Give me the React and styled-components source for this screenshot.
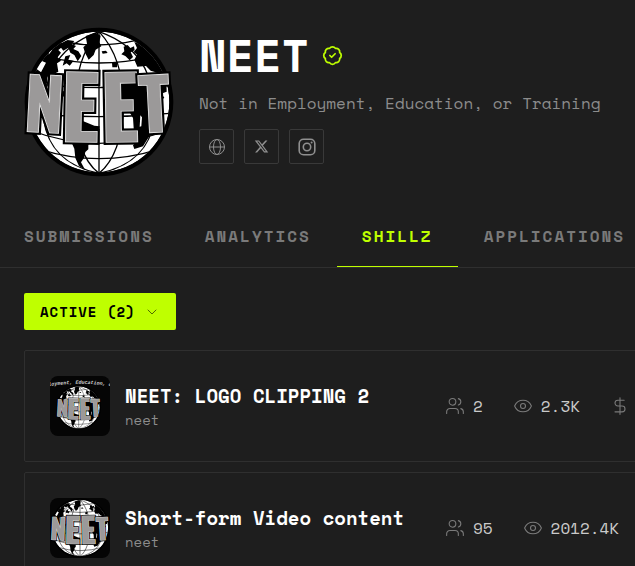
import React from "react";
import styled, { createGlobalStyle } from "styled-components";
import { BadgeCheck, ChevronDown, DollarSign, Eye, Users } from "lucide-react";

const GlobalStyle = createGlobalStyle`
  *, *::before, *::after { box-sizing: border-box; }
  body {
    margin: 0;
    background: #1e1e1e;
    color: #fff;
    font-family: "Space Mono", "DejaVu Sans Mono", monospace;
  }
  button { font-family: inherit; cursor: pointer; }
  h1, h2, p { margin: 0; }
  svg { display: block; flex: none; }
`;

const Page = styled.div`
  height: 100vh;
  overflow: hidden;
`;

const Header = styled.header`
  display: flex;
  gap: 25px;
  padding: 27px 24px 0;
`;

const Avatar = styled.div`
  flex: none;
  width: 150px;
  height: 150px;
`;

const Profile = styled.div`
  display: flex;
  flex-direction: column;
  min-width: 0;
  padding-top: 1px;
`;

const NameRow = styled.div`
  display: flex;
  align-items: center;
  gap: 13px;
  height: 54px;
  color: #bfff00;
`;

const Name = styled.h1`
  color: #fff;
  font-size: 45px;
  line-height: 54px;
  font-weight: 700;
`;

const Bio = styled.p`
  margin-top: 8px;
  color: #8c8c8c;
  font-size: 16px;
  line-height: 26px;
  white-space: nowrap;
`;

const Socials = styled.div`
  display: flex;
  gap: 10px;
  margin-top: 13px;
`;

const SocialLink = styled.a`
  display: grid;
  place-items: center;
  width: 35px;
  height: 35px;
  border: 1px solid #393939;
  border-radius: 2px;
  color: #8f8f8f;
`;

const Tabs = styled.nav`
  display: flex;
  gap: 1px;
  margin-top: 29px;
  padding-left: 24px;
  border-bottom: 1px solid #2f2f2f;
`;

const Tab = styled.button`
  flex: none;
  padding: 0 25px;
  height: 61px;
  border: 0;
  border-bottom: 1px solid ${(p) => (p.$active ? "#bfff00" : "transparent")};
  background: none;
  color: ${(p) => (p.$active ? "#bfff00" : "#7a7a7a")};
  font-size: 16px;
  font-weight: 700;
  line-height: 24px;
  letter-spacing: 2px;
  text-transform: uppercase;
  &:first-child { padding-left: 0; }
`;

const Content = styled.main`
  padding: 25px 24px;
`;

const FilterButton = styled.button`
  display: flex;
  align-items: center;
  gap: 8px;
  height: 37px;
  padding: 0 16px;
  border: 0;
  border-radius: 2px;
  background: #bfff00;
  color: #000;
  font-size: 14px;
  font-weight: 700;
  letter-spacing: 1px;
  text-transform: uppercase;
  svg { color: #4f6a00; }
`;

const CardList = styled.div`
  display: grid;
  gap: 10px;
  min-width: 720px;
  margin-top: 20px;
`;

const Card = styled.article`
  display: grid;
  grid-template-columns: 60px 305px auto;
  align-items: center;
  column-gap: 15px;
  padding: 25px;
  border: 1px solid #2f2f2f;
  border-radius: 2px;
`;

const Thumb = styled.div`
  width: 60px;
  height: 60px;
  overflow: hidden;
  border-radius: 8px;
  background: #050505;
`;

const CardText = styled.div`
  padding-top: 2px;
`;

const CardTitle = styled.h2`
  font-size: 19px;
  line-height: 26px;
  font-weight: 700;
  white-space: nowrap;
`;

const CardOwner = styled.p`
  color: #8c8c8c;
  font-size: 14px;
  line-height: 22px;
`;

const Stats = styled.div`
  display: flex;
  gap: 30px;
`;

const Stat = styled.span`
  display: flex;
  align-items: center;
  gap: 8px;
  color: #cacaca;
  font-size: 16px;
  line-height: 24px;
  svg { color: #7a7a7a; }
`;

const LogoLetter = styled.text`
  font-family: "Oswald", "Liberation Sans Narrow", sans-serif;
  font-weight: 600;
  text-anchor: middle;
  stroke-linejoin: miter;
`;

const LETTERS = [
  { c: "N", x: 84, y: 335, size: 208, turn: 3 },
  { c: "E", x: 194, y: 364, size: 254, turn: 1 },
  { c: "E", x: 316, y: 364, size: 254, turn: -1 },
  { c: "T", x: 423, y: 335, size: 208, turn: -3 },
];

const LETTER_LAYERS = [
  { fill: "#000", stroke: "#000", width: 20 },
  { fill: "#9b9999", stroke: "#e8e8e8", width: 7 },
  { fill: "#9b9999", stroke: "#9b9999", width: 2 },
];

function Globe({ id, viewBox = "27 21 450 450", caption }) {
  return (
    <svg width="100%" height="100%" viewBox={viewBox} role="img" aria-label="NEET globe logo">
      <defs>
        <clipPath id={id}>
          <circle cx="252" cy="246" r="211" />
        </clipPath>
        {caption && <path id={`${id}-arc`} d="M-60 34 Q262 -14 590 34" />}
      </defs>
      <circle cx="252" cy="246" r="223" fill="#000" />
      <g clipPath={`url(#${id})`}>
        <circle cx="252" cy="246" r="211" fill="#fff" />
        <g fill="none" stroke="#000" strokeWidth="4">
          <path d="M252 30V470" />
          <path d="M252 35C200 90 180 170 180 260C185 350 200 420 252 460M252 35C304 90 326 170 326 260C322 350 300 420 252 460" />
          <path d="M252 35C110 85 82 190 86 300C100 390 155 440 252 460M252 35C394 85 422 190 418 300C404 390 349 440 252 460" />
          <path d="M150 66Q252 86 360 62M92 110Q252 148 412 110M50 190Q252 215 455 190M40 280Q252 300 464 280M44 330Q252 410 460 330M75 388Q252 444 430 388" />
        </g>
        <g fill="#000">
          <path d="M35 190L50 140L90 95L135 65L148 76L130 90L138 98L128 112L138 122L126 130L130 155L98 170L92 220L35 225Z" />
          <path d="M138 70L158 60L178 63L170 72L183 78L175 87L190 94L199 108L188 124L178 105L166 98L160 83L145 92L137 82Z" />
          <path d="M151 109L166 105L160 119L176 122L164 137L155 130L143 137Z" />
          <path d="M212 48L242 38L257 47L253 67L259 79L242 89L236 105L221 119L210 98L205 82L216 71Z" />
          <path d="M260 94L273 92L278 99L263 101ZM291 128L308 126L306 142L292 142Z" />
          <path d="M326 80L338 75L346 84L357 79L359 91L347 97L354 111L344 121L331 108L319 103L328 94Z" />
          <path d="M358 66L389 76L426 105L453 151L455 215L436 222L432 160L407 152L393 138L367 140L358 119L366 104L356 96L366 84Z" />
          <path d="M302 184L330 187L365 181L434 194L433 220L448 232L426 262L420 312L402 350L384 379L358 387L354 376L370 360L357 340L354 294L343 275L310 272L300 239Z" />
          <path d="M166 286L184 293L198 301L238 317L254 319L250 353L220 374L220 388L211 396L207 414L198 427L210 449L192 438L181 414L178 386L169 366L174 329Z" />
          <path d="M126 218L181 205L184 220L143 230L136 306L127 306Z" />
        </g>
        <g fill="#fff">
          <path d="M61 144L81 123L93 128L78 157ZM101 104L111 91L104 88Z" />
          <path d="M376 286L381 292L379 319L374 320ZM309 184L316 181L318 188Z" />
        </g>
      </g>
      {LETTERS.map((l) => (
        <g key={l.x} transform={`rotate(${l.turn} ${l.x} ${l.y})`}>
          {LETTER_LAYERS.map((layer) => (
            <LogoLetter
              key={layer.width}
              x={l.x}
              y={l.y}
              fontSize={l.size}
              fill={layer.fill}
              stroke={layer.stroke}
              strokeWidth={layer.width}
            >
              {l.c}
            </LogoLetter>
          ))}
        </g>
      ))}
      {caption && (
        <text fill="#d5d5d5" fontSize="50" fontWeight="700" fontStyle="italic" fontFamily='"Liberation Mono", monospace' textAnchor="middle">
          <textPath href={`#${id}-arc`} startOffset="50%">{caption}</textPath>
        </text>
      )}
    </svg>
  );
}

const WebIcon = () => (
  <svg width="18" height="18" viewBox="0 0 18 18" fill="none" stroke="currentColor" strokeWidth="1">
    <circle cx="9" cy="9" r="7.5" />
    <ellipse cx="9" cy="9" rx="3.5" ry="7.5" />
    <path d="M1.5 9h15" />
  </svg>
);

const XIcon = () => (
  <svg width="15" height="15" viewBox="0 0 24 24" fill="currentColor">
    <path d="M18.244 2.25h3.308l-7.227 8.26 8.502 11.24H16.17l-5.214-6.817L4.99 21.75H1.68l7.73-8.835L1.254 2.25H8.08l4.713 6.231zm-1.161 17.52h1.833L7.084 4.126H5.117z" />
  </svg>
);

const InstagramIcon = () => (
  <svg width="18" height="18" viewBox="0 0 18 18" fill="none" stroke="currentColor" strokeWidth="1.6">
    <rect x="1.2" y="1.2" width="15.6" height="15.6" rx="4.3" />
    <circle cx="9" cy="9" r="3.7" />
    <circle cx="13.6" cy="4.5" r="1" fill="currentColor" stroke="none" />
  </svg>
);

const TABS = ["Submissions", "Analytics", "Shillz", "Applications"];

const CAMPAIGNS = [
  { id: "clipping", title: "NEET: LOGO CLIPPING 2", owner: "neet", members: "2", views: "2.3K", paid: true, viewBox: "-35 -68 600 600", caption: "loyment, Education, o" },
  { id: "short-form", title: "Short-form Video content", owner: "neet", members: "95", views: "2012.4K", paid: false, viewBox: "27 21 450 450" },
];

export default function App() {
  return (
    <>
      <GlobalStyle />
      <Page>
        <Header>
          <Avatar><Globe id="avatar" /></Avatar>
          <Profile>
            <NameRow>
              <Name>NEET</Name>
              <BadgeCheck size={21} strokeWidth={2} aria-label="Verified" />
            </NameRow>
            <Bio>Not in Employment, Education, or Training</Bio>
            <Socials>
              <SocialLink href="#website" aria-label="Website"><WebIcon /></SocialLink>
              <SocialLink href="#x" aria-label="X"><XIcon /></SocialLink>
              <SocialLink href="#instagram" aria-label="Instagram"><InstagramIcon /></SocialLink>
            </Socials>
          </Profile>
        </Header>
        <Tabs>
          {TABS.map((t) => (
            <Tab key={t} type="button" $active={t === "Shillz"}>{t}</Tab>
          ))}
        </Tabs>
        <Content>
          <FilterButton type="button">
            Active (2)
            <ChevronDown size={16} strokeWidth={1.5} />
          </FilterButton>
          <CardList>
            {CAMPAIGNS.map((c) => (
              <Card key={c.id}>
                <Thumb><Globe id={c.id} viewBox={c.viewBox} caption={c.caption} /></Thumb>
                <CardText>
                  <CardTitle>{c.title}</CardTitle>
                  <CardOwner>{c.owner}</CardOwner>
                </CardText>
                <Stats>
                  <Stat><Users size={20} strokeWidth={1.3} />{c.members}</Stat>
                  <Stat><Eye size={20} strokeWidth={1.3} />{c.views}</Stat>
                  {c.paid && <Stat><DollarSign size={20} strokeWidth={1.3} /></Stat>}
                </Stats>
              </Card>
            ))}
          </CardList>
        </Content>
      </Page>
    </>
  );
}
